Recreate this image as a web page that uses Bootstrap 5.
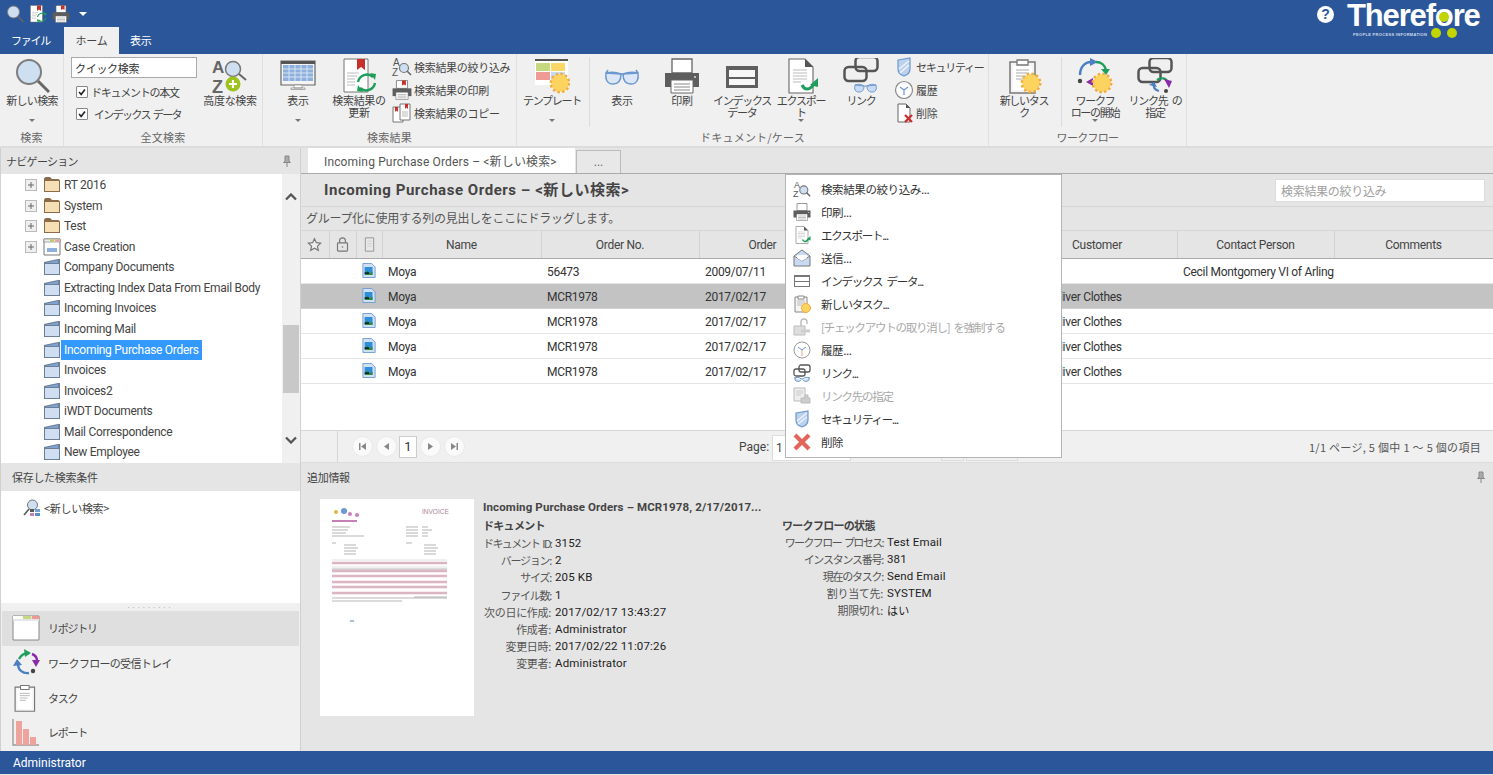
<!DOCTYPE html>
<html lang="ja">
<head>
<meta charset="utf-8">
<title>Therefore</title>
<link href="https://cdn.jsdelivr.net/npm/bootstrap@5.3.0/dist/css/bootstrap.min.css" rel="stylesheet">
<style>
html,body{height:775px;overflow:hidden}
body{font-family:Roboto,"Noto Sans CJK JP",sans-serif;font-size:12px;color:#444;background:#e5e5e5;line-height:14px}
.cj{font-family:"Noto Sans CJK JP",Roboto,sans-serif;font-size:11px;letter-spacing:-.3px}
.cj .k1,.k1{letter-spacing:-1.25px;word-spacing:3px}
.cj .k2,.k2{letter-spacing:-.7px}
.k3,.cj.k3{letter-spacing:-1.6px;word-spacing:2px}
.app-top{height:54px;background:#2b579a;color:#fff}
.qbar{height:27px;padding-left:6px;gap:5px}
.qbar svg{width:18px;height:18px}
.qcaret{border-left:4px solid transparent;border-right:4px solid transparent;border-top:4px solid #fff;margin-left:4px}
.tabstrip{height:27px}
.ttab{padding:0 11px;line-height:27px;color:#fff;white-space:nowrap}
.ttab.on{background:#f0f0f0;color:#444}
.ttab.t1{width:64px}.ttab.t2{width:55px;text-align:center;padding:0}.ttab.t3{width:44px}
.logo-wrap{width:170px;height:54px;position:relative}
.help{position:absolute;left:-6px;top:6px;width:17px;height:17px;border-radius:50%;background:#fff;color:#2b579a;font:bold 14px/17px "Liberation Sans",sans-serif;text-align:center}
.lg-name{position:absolute;left:24px;top:0;font:bold 31px/32px "Liberation Sans",sans-serif;letter-spacing:-1.15px;color:#fff}
.lg-tag{position:absolute;left:30px;top:32px;font:bold 4px/5px "Liberation Sans",sans-serif;letter-spacing:.32px;color:#cfd9ea;white-space:nowrap}
.lg-dot{position:absolute;width:10px;height:10px;border-radius:50%;background:#c2d500}
.lg-a{left:116px;top:12px}.lg-b{left:108px;top:28px}.lg-c{left:124px;top:28px}

.ribbon{height:94px;background:#f0f0f0;border-bottom:2px solid #dcdcdc}
.rgrp{border-right:1px solid #dfdfdf;height:92px}
.rbody{height:74px}
.rlabel{height:18px;line-height:18px;text-align:center;color:#666;letter-spacing:.2px}
.g1{width:64px}.g2{width:199px}.g3{width:254px}.g4{width:472px}.g5{width:198px}
.bigbtn{width:60px;padding-top:4px;color:#444;line-height:12px;text-align:center;flex:none}
.bigbtn svg{width:36px;height:36px;display:block}
.blab{min-height:24px;white-space:nowrap}
.dcaret{width:0;height:0;border-left:3px solid transparent;border-right:3px solid transparent;border-top:3px solid #777;margin-top:1px}
.w64{width:64px}.w66{width:66px}.w56{width:56px}.w70{width:70px}.w58{width:58px}.w62{width:62px}
.pl7{padding-left:7px}
.qsearch{width:126px;margin:3px 0 0 7px;flex:none}
.qinput{height:21px;padding:0 3px;border:1px solid #aaa;border-radius:0;font-size:11px;color:#333;box-shadow:none}
.chk{height:22px;margin-left:5px;gap:3px;white-space:nowrap}
.chk1{margin-top:3px}
.chk .form-check-input,.chk .form-check-input:checked[type=checkbox]{width:12px;height:12px;margin:0;border:1px solid #888;border-radius:1px;background-color:#fff;flex:none;--bs-form-check-bg-image:url("data:image/svg+xml,%3csvg xmlns='http://www.w3.org/2000/svg' viewBox='0 0 12 12'%3e%3cpath fill='none' stroke='%23222' stroke-width='2' d='M2.5 6l2.5 3 4.5-6'/%3e%3c/svg%3e")}
.smcol{padding-top:1px;flex:none}
.smitem{height:23px;gap:2px;white-space:nowrap}
.smitem svg{width:20px;height:20px;flex:none}
.vsep{width:1px;height:70px;background:#dcdcdc;margin:3px 2px 0 2px;flex:none}
.sc1{margin-left:3px}.sc2{margin-left:1px}

.mainarea{height:603px}
.leftp{width:301px;border-left:1px solid #d0d0d0;border-right:1px solid #d0d0d0;flex:none}
.phead{height:26px;line-height:26px;padding-left:5px;background:#e5e5e5;color:#444}
.phead svg{width:10px;height:12px}
.treebox{height:289px;background:#fff}
.treelist{flex:1;margin:0;letter-spacing:-.28px;padding-top:1px}
.tnode{height:20.54px;white-space:nowrap}
.texp{width:12px;height:12px;margin-left:24px;flex:none}
.tnone{width:12px;margin-left:24px;flex:none}
.ticon{width:18px;height:18px;margin-left:6px;flex:none}
.ttext{padding:0 3px;line-height:20px}
.ttext.sel{background:#3399ff;color:#fff}
.sbar{width:18px;background:#f0f0f0;position:relative}
.sthumb{position:absolute;left:1px;right:1px;top:151px;height:68px;background:#c8c8c8}
.schev{position:absolute;left:3px;width:12px;height:8px}
.schev.up{top:19px}.schev.dn{top:262px}
.ph2{height:28px;line-height:28px;padding-left:11px}
.savedbox{height:112px;background:#fff;padding:8px 0 0 22px;gap:3px}
.savedbox svg{width:18px;height:18px}
.savedbox span{line-height:18px}
.splitbar{height:8px;background:#f0f0f0;color:#999;font-size:8px;line-height:6px;text-align:center;letter-spacing:3px}
.navbox{height:140px;background:#f0f0f0;padding-left:1px}
.nvrow{height:34.7px;padding-left:10px;gap:8px;margin-right:1px}
.nvrow.on{background:#dfdfdf}
.nvrow svg{width:28px;height:28px;flex:none}

.rightp{min-width:0;flex:1}
.tabbar{height:26px;background:#e5e5e5;border-bottom:1px solid #aaa;padding-left:7px}
.dtab{height:25px;line-height:29px;padding:0 0 0 16px;width:267px;background:#fff;color:#555;letter-spacing:.15px}
.dtab2{width:45px;height:23px;margin:2px 0 0 1px;border:1px solid #bbb;border-bottom:0;text-align:center;line-height:22px;color:#666;background:#e8e8e8}
.rtitle{height:33px;border-bottom:1px solid #d6d6d6;padding:0 8px 0 23px}
.rtitle h1{font:bold 15px/20px Roboto,"Noto Sans CJK JP",sans-serif;color:#444;margin:0;letter-spacing:.55px}
.rfilter{width:210px;height:23px;border:1px solid #ddd;border-radius:0;padding:0 5px;color:#999;font-size:12px}
.rfilter::placeholder{color:#a0a0a0}
.rgroup{height:24px;border-bottom:1px solid #d6d6d6;line-height:21px;padding-left:5px;color:#555;font-size:12px}
.gridwrap{height:199px;background:#fff}
.tgrid{table-layout:fixed;width:1192px;margin:0;--bs-table-bg:transparent;font-size:12px;color:#333;letter-spacing:-.3px}
.tgrid th{height:27px;padding:1px 0 0;font-weight:400;text-align:center;background:#e5e5e5;border-right:1px solid #d2d2d2;border-bottom:1px solid #aaa;color:#444;vertical-align:middle}
.tgrid th.odate{word-spacing:6px}
.tgrid th svg{width:15px;height:15px;vertical-align:middle}
.tgrid td{height:25px;padding:3px 0 0 6px;background:#fff;border-bottom:1px solid #e6e6e6;white-space:nowrap;overflow:hidden;vertical-align:middle}
.tgrid td.dc{padding:0;text-align:center}
.tgrid td svg{width:14px;height:17px;vertical-align:middle}
.tgrid td.cust{padding-left:35px}
.tgrid tr.sel td{background:#c3c3c3;border-bottom-color:#d0d0d0}
.c1{width:28px}.c2{width:27px}.c3{width:26px}.c4{width:159px}.c5{width:158px}.c6{width:159px}.c7{width:159px}.c8{width:160px}.c9{width:157px}.c10{width:159px}
.pager{height:33px;background:#f0f0f0;border-top:1px solid #d6d6d6;border-bottom:1px solid #dcdcdc}
.pgside{width:37px;height:100%;border-right:1px solid #d6d6d6;flex:none}
.pgbtn{width:21px;height:21px;padding:0;border:1px solid #e8e8e8;background:#fafafa;border-radius:50%;margin-left:3px;line-height:17px;color:#888;flex:none}
.pgbtn svg{width:9px;height:9px;display:block;margin:auto}
.pgfirst{margin-left:14px}
.pgnum{width:18px;height:22px;border:1px solid #ccc;background:#fff;text-align:center;line-height:20px;color:#333;margin-left:2px;font-size:13px;flex:none}
.pglabel{margin-left:274px;width:33px;flex:none}
.pginput{width:79px;height:26px;border:1px solid #ddd;background:#fff;line-height:24px;padding-left:3px;flex:none;margin-top:2px}
.pgsel1{width:23px;height:26px;border:1px solid #ddd;margin:2px 0 0 90px;flex:none}
.pgsel2{width:52px;height:26px;border:1px solid #ddd;margin:2px 0 0 2px;flex:none}
.pginfo{margin-left:auto;padding-right:12px;color:#555;letter-spacing:.3px;white-space:pre}
.infohead{height:28px;line-height:28px;padding:0 3px 0 6px}
.infohead svg{width:10px;height:12px}
.infobody{height:260px;padding:8px 0 0 19px}
.thumb{width:154px;height:217px;background:#fff;flex:none}
.thumb svg{width:154px;height:217px;display:block}
.infotext{margin-left:9px;color:#333;font-size:11.5px}
.ititle{font-weight:700;color:#444;height:17px;line-height:17px;font-size:11.5px;letter-spacing:.13px}
.iheads{font-weight:700;color:#444;height:18px;line-height:18px}
.icols{width:800px}
.icol1{width:299px;flex:none}
.icol1 dl{padding-top:1px}
.irow{height:17.2px;line-height:17px;margin:0}
.irow2{height:17px}
.ilab{text-align:right;flex:none;white-space:nowrap;color:#555}
.ilab1{width:68px}.ilab2{width:101px}
.ival{padding-left:4px;color:#222;white-space:nowrap;letter-spacing:.15px}
.statusb{height:23px;background:#2b579a;color:#fff;line-height:24px;padding-left:13px}
.ctxmenu{position:absolute;left:785px;top:174px;width:277px;height:284px;background:#fff;border:1px solid #b4b4b4;padding:2px 0 0 0;margin:0;z-index:5}
.ctxmenu li{height:23px;gap:10px;padding-left:7px;color:#333}
.ctxmenu svg{width:18px;height:18px;flex:none}
.ctxmenu .dis{color:#a8a8a8}
.ctxmenu .cjm{font-family:"Noto Sans CJK JP",Roboto,sans-serif;font-size:11.5px;letter-spacing:-.4px;white-space:nowrap}
.ctxmenu .cjm.k1{letter-spacing:-1.25px;word-spacing:3px}
</style>
</head>
<body>
<svg class="d-none" xmlns="http://www.w3.org/2000/svg">
<symbol id="i-mag" viewBox="0 0 36 36"><circle cx="15" cy="14" r="12" fill="#cfdff2" stroke="#7d7d7d" stroke-width="2"/><path d="M24 23l11 11" stroke="#666" stroke-width="3"/></symbol>
<symbol id="i-sun" viewBox="0 0 20 20"><circle cx="10" cy="10" r="8" fill="#fcd35f" stroke="#f2ac3c" stroke-width="3" stroke-dasharray="2.2 2"/><circle cx="10" cy="10" r="7.5" fill="#fcd35f"/></symbol>
<symbol id="i-docr" viewBox="0 0 36 36"><path d="M3 1h24v33H3z" fill="#fff" stroke="#777"/><path d="M16 1h8v11l-4-3-4 3z" fill="#c9302c"/><path d="M6 15h12M6 18h10M6 21h8M6 24h8M6 27h8" stroke="#bbb"/><path d="M17 24a9 9 0 0 1 15-5" fill="none" stroke="#1f9e5b" stroke-width="2.4"/><path d="M34 25a9 9 0 0 1-15 5" fill="none" stroke="#1f9e5b" stroke-width="2.4"/><path d="M29 15l6 1-1 6zM22 34l-6-1 1-6z" fill="#1f9e5b"/></symbol>
<symbol id="i-print" viewBox="0 0 36 36"><path d="M8 1h20v14H8z" fill="#fff" stroke="#666" stroke-width="1.3"/><path d="M1 15h34v14H1z" fill="#5d5d5d"/><path d="M7 22h22v13H7z" fill="#fff" stroke="#666"/><path d="M10 26h16M10 29h16M10 32h16" stroke="#888"/><circle cx="31" cy="19" r="1" fill="#ddd"/></symbol>
<symbol id="i-printr" viewBox="0 0 36 36"><path d="M8 1h20v14H8z" fill="#fff" stroke="#666" stroke-width="1.3"/><path d="M18 1h7v9l-3.5-2-3.500 2z" fill="#c9302c"/><path d="M1 15h34v14H1z" fill="#5d5d5d"/><path d="M7 22h22v13H7z" fill="#fff" stroke="#666"/><path d="M10 26h16M10 29h16M10 32h16" stroke="#888"/></symbol>
<symbol id="i-az" viewBox="0 0 20 20"><text x="1" y="9" font-family="Liberation Sans" font-size="10" fill="#555">A</text><text x="0" y="19" font-family="Liberation Sans" font-size="10" fill="#555">Z</text><circle cx="12" cy="11" r="4.500" fill="#cfdff2" stroke="#777" stroke-width="1.200"/><path d="M15 14l4 4" stroke="#666" stroke-width="1.600"/></symbol>
<symbol id="i-azbig" viewBox="0 0 36 36"><text x="0" y="15" font-family="Liberation Sans" font-weight="700" font-size="17" fill="#666">A</text><text x="0" y="35" font-family="Liberation Sans" font-weight="700" font-size="18" fill="#666">Z</text><circle cx="21" cy="11" r="7.500" fill="#cfdff2" stroke="#777" stroke-width="1.500"/><path d="M27 16l7 6" stroke="#666" stroke-width="2"/><circle cx="21" cy="26" r="7.500" fill="#9dc31f"/><path d="M17 26h8M21 22v8" stroke="#fff" stroke-width="2.200"/></symbol>
<symbol id="i-mon" viewBox="0 0 36 36"><path d="M1 3h34v24H1z" fill="#f4f4f4" stroke="#666" stroke-width="1.200"/><path d="M1 3h34v3H1z" fill="#555"/><path d="M3 7h30v16H3z" fill="#8db1dc"/><path d="M3 11h30M3 15h30M3 19h30M9 7v16M15 7v16M21 7v16M27 7v16" stroke="#dfe9f5" stroke-width=".9"/><path d="M14 27h8v3h-8zM11 30h14v1.500H11z" fill="#fff" stroke="#888" stroke-width=".7"/></symbol>
<symbol id="i-copy" viewBox="0 0 20 20"><path d="M1 4h10v15H1z" fill="#fff" stroke="#777"/><path d="M8 1h10v16H8z" fill="#fff" stroke="#777"/><path d="M3 4h3v5l-1.500-1.500L3 9zM13 1h3v5l-1.500-1.500L13 6z" fill="#c9302c"/><path d="M10 9h6M10 11h6M10 13h6" stroke="#bbb"/></symbol>
<symbol id="i-tmpl" viewBox="0 0 36 36"><path d="M1 1h33v26H1z" fill="#fff"/><path d="M1 1h33v2H1z" fill="#555"/><path d="M2 5h14v8H2z" fill="#c5d77f"/><path d="M17 5h14v8H17z" fill="#fbd766"/><path d="M2 14h14v8H2z" fill="#ee9b96"/><path d="M17 14h14v8H17z" fill="#c8daf1"/><use href="#i-sun" x="15" y="14" width="22" height="22"/></symbol>
<symbol id="i-glass" viewBox="0 0 36 36"><path d="M2 15c-1 6 1 11 7 11s8-4 8-10zM34 15c1 6-1 11-7 11s-8-4-8-10z" fill="#dbe7f7" stroke="#6c98d0" stroke-width="1.500"/><path d="M2 15c5-1 10-1 15 1h2c5-2 10-2 15-1M2 15l2-3M34 15l-2-3" fill="none" stroke="#6c98d0" stroke-width="1.500"/></symbol>
<symbol id="i-card" viewBox="0 0 36 36"><path d="M2 8h32v22H2z" fill="#5f5f5f"/><path d="M5 12h26v7H5zM5 21h26v6H5z" fill="#f7f7f7"/></symbol>
<symbol id="i-expo" viewBox="0 0 36 36"><path d="M6 1h16l8 8v26H6z" fill="#fff" stroke="#666" stroke-width="1.100"/><path d="M22 1v8h8z" fill="#555"/><path d="M10 12h14M10 15h14M10 18h14M10 21h14M10 24h8" stroke="#bbb"/><path d="M19 27c3 6 8 5 12-1" fill="none" stroke="#1f9e5b" stroke-width="3"/><path d="M35 20v9l-8-2z" fill="#1f9e5b"/></symbol>
<symbol id="i-chain" viewBox="0 0 36 36"><rect x="1.500" y="12" width="22" height="14" rx="4" fill="none" stroke="#555" stroke-width="2.500"/><rect x="12.500" y="2" width="22" height="14" rx="4" fill="none" stroke="#555" stroke-width="2.500"/></symbol>
<symbol id="i-linkg" viewBox="0 0 36 36"><use href="#i-chain" x="0" y="-3" width="36" height="36"/><path d="M12 27c-1 4 0 7 4 7s5-3 5-6zM33 27c1 4 0 7-4 7s-5-3-5-6z" fill="#c9dbf3" stroke="#6c98d0"/><path d="M12 27c3-1 6-1 9 1h3c3-2 6-2 9-1" fill="none" stroke="#6c98d0"/></symbol>
<symbol id="i-shield" viewBox="0 0 20 20"><path d="M4 3l12-2v11c0 4-3 6-6 7-3-1-6-3-6-7z" fill="#bcd1ec" stroke="#6c98d0" stroke-width="1.200"/><path d="M5 12l10-8M6 16l9-8" stroke="#eef4fb" stroke-width="1.500"/></symbol>
<symbol id="i-clock" viewBox="0 0 20 20"><circle cx="10" cy="10" r="8.500" fill="#fff" stroke="#888" stroke-width="1.200"/><path d="M6 7l4 3 4-3M10 10v5" fill="none" stroke="#6c98d0" stroke-width="1.200"/></symbol>
<symbol id="i-deld" viewBox="0 0 20 20"><path d="M4 1h8l4 4v14H4z" fill="#fff" stroke="#666"/><path d="M12 1v4h4z" fill="#555"/><path d="M11 12l7 7M18 12l-7 7" stroke="#c9302c" stroke-width="2.300"/></symbol>
<symbol id="i-clip" viewBox="0 0 36 36"><path d="M4 4h25v31H4z" fill="#f5f5f5" stroke="#777" stroke-width="1.500"/><path d="M7 8h19v24H7z" fill="#fff"/><path d="M11 2h11v5H11z" fill="#fff" stroke="#777" stroke-width="1.300"/><path d="M10 12h13M10 15h13M10 18h10M10 21h8" stroke="#aaa"/></symbol>
<symbol id="i-task" viewBox="0 0 36 36"><use href="#i-clip" x="0" y="0" width="36" height="36"/><use href="#i-sun" x="14" y="14" width="22" height="22"/></symbol>
<symbol id="i-wf" viewBox="0 0 36 36"><path d="M3 17C3 9 8 4 14 4" fill="none" stroke="#4a7fc1" stroke-width="2.500"/><path d="M13 0l8 4-8 4z" fill="#4a7fc1"/><path d="M19 4c5 0 9 3 10 8" fill="none" stroke="#1f9e5b" stroke-width="2.500"/><path d="M24 11h9l-4 6z" fill="#1f9e5b"/><path d="M9 24l7-4v8z" fill="#8a2aa8"/><circle cx="3" cy="23" r="2.200" fill="#444"/><use href="#i-sun" x="14" y="14" width="22" height="22"/></symbol>
<symbol id="i-lnkto" viewBox="0 0 36 36"><use href="#i-chain"  x="0" y="-2" width="36" height="36"/><path d="M20 22c4-3 9-2 11 2" fill="none" stroke="#1f9e5b" stroke-width="2.200"/><path d="M27 21l8 2-3 7z" fill="#8a2aa8"/><path d="M22 33c-4-1-6-4-5-8" fill="none" stroke="#4a7fc1" stroke-width="2.200"/><path d="M12 27l5-3 3 5z" fill="#4a7fc1"/><circle cx="29" cy="33" r="2" fill="#444"/></symbol>
<symbol id="i-ftan" viewBox="0 0 18 18"><path d="M1 16V3c0-1 1-2 2-2h4l2 2h6c1 0 2 1 2 2v11z" fill="#8c6b4a"/><path d="M2 15V5h14v10z" fill="#f5dfb5"/></symbol>
<symbol id="i-fblue" viewBox="0 0 18 18"><path d="M1 17V4l14-3h2v16z" fill="#6d7f96"/><path d="M2 16V6h14v10z" fill="#cfdef0"/><path d="M2 5l13-3v3z" fill="#7fa3d1"/></symbol>
<symbol id="i-case" viewBox="0 0 18 18"><path d="M1 1h16v16H1z" fill="#fff" stroke="#777"/><path d="M1 1h16v3H1z" fill="#eee" stroke="#777" stroke-width=".6"/><path d="M7 1.500h4v2H7z" fill="#b5cc55"/><path d="M12 1.500h4v2h-4z" fill="#ee9b96"/><path d="M4 10h10v4H4z" fill="#8db1dc"/></symbol>
<symbol id="i-exp" viewBox="0 0 12 12"><rect x=".5" y=".5" width="11" height="11" fill="#efefef" stroke="#bbb"/><path d="M3 6h6M6 3v6" stroke="#666"/></symbol>
<symbol id="i-pin" viewBox="0 0 10 12"><path d="M3 1h4v5l1.500 1.500h-7L3 6zM5 8v4" fill="#aaa" stroke="#888"/></symbol>
<symbol id="i-up" viewBox="0 0 12 8"><path d="M1 6.500l5-5 5 5" fill="none" stroke="#555" stroke-width="2.300"/></symbol>
<symbol id="i-dn" viewBox="0 0 12 8"><path d="M1 1.500l5 5 5-5" fill="none" stroke="#555" stroke-width="2.300"/></symbol>
<symbol id="i-saved" viewBox="0 0 18 18"><circle cx="9.500" cy="6" r="5" fill="#cfdff2" stroke="#777"/><path d="M6 10l-5 6" stroke="#555" stroke-width="1.500"/><path d="M7 10h4v3H7z" fill="#555"/><path d="M12 10h5v3h-5z" fill="#6fa0d8"/><path d="M7 14h4v3H7z" fill="#c77fb8"/><path d="M12 14h5v3h-5z" fill="#5b8fc9"/></symbol>
<symbol id="i-repo" viewBox="0 0 28 28"><path d="M1 2h26v24H1z" fill="#fff" stroke="#888"/><path d="M1 2h26v5H1z" fill="#e6e6e6"/><path d="M1 2h9l3 3H1z" fill="#fff"/><path d="M11 2h8v3h-8z" fill="#c5d77f"/><path d="M20 2h7v3h-7z" fill="#ee9b96"/></symbol>
<symbol id="i-wfn" viewBox="0 0 28 28"><path d="M7 10c2-4 6-6 10-6" fill="none" stroke="#1f9e5b" stroke-width="2.400"/><path d="M12 0l7 4-6 4z" fill="#1f9e5b"/><path d="M20 5c3 1 5 4 5 7" fill="none" stroke="#8a2aa8" stroke-width="2.400"/><path d="M20 11h8l-4 7z" fill="#8a2aa8"/><path d="M17 24c-6 1-11-3-11-9" fill="none" stroke="#4a7fc1" stroke-width="2.400"/><path d="M1 17l4-7 5 6z" fill="#4a7fc1"/><circle cx="21" cy="22" r="2.200" fill="#444"/></symbol>
<symbol id="i-rep" viewBox="0 0 28 28"><path d="M1 1v26h26" fill="none" stroke="#999" stroke-width="1.300"/><path d="M4 3h6v24H4zM11 11h6v16h-6zM18 19h6v8h-6z" fill="#efa39d"/></symbol>
<symbol id="i-star" viewBox="0 0 18 18"><path d="M9 2l2.200 4.800 5.200.6-3.900 3.500 1.100 5.100L9 13.400 4.400 16l1.100-5.100L1.600 7.400l5.200-.6z" fill="#eee" stroke="#777" stroke-width="1.400"/></symbol>
<symbol id="i-lock" viewBox="0 0 18 18"><rect x="3" y="7" width="12" height="10" rx="1" fill="none" stroke="#777" stroke-width="1.400"/><path d="M5.500 7V4.500C5.500 2 7 1 9 1s3.500 1 3.500 3.500V7" fill="none" stroke="#777" stroke-width="1.400"/><circle cx="9" cy="12" r="1" fill="#777"/></symbol>
<symbol id="i-page" viewBox="0 0 18 18"><path d="M4 1h10v16H4z" fill="#e8e8e8" stroke="#888"/><path d="M6 5h6M6 8h6M6 11h6" stroke="#ccc"/></symbol>
<symbol id="i-imgdoc" viewBox="0 0 16 18"><path d="M1 1h10l4 4v12H1z" fill="#cfe0f5" stroke="#6c98d0"/><path d="M3 5h9v9H3z" fill="#2e8fd8"/><path d="M3 14l3-5 3 3 3-2v4z" fill="#2f8a3c"/><path d="M3 11h5v2H3z" fill="#123"/></symbol>
<symbol id="i-mail" viewBox="0 0 18 18"><path d="M1 7l8-6 8 6v10H1z" fill="#c9dbf3" stroke="#777"/><path d="M1 7l8 5 8-5" fill="#eef4fb" stroke="#777"/><path d="M4 6h10v3l-5 3-5-3z" fill="#fff"/></symbol>
<symbol id="i-cardm" viewBox="0 0 18 18"><path d="M1 3h16v12H1z" fill="#777"/><path d="M2 5h14v4H2zM2 10h14v4H2z" fill="#fff"/></symbol>
<symbol id="i-taskm" viewBox="0 0 18 18"><path d="M2 2h12v15H2z" fill="#f5f5f5" stroke="#888"/><path d="M5 1h6v3H5z" fill="#fff" stroke="#888"/><path d="M4 6h8M4 8h8M4 10h5" stroke="#bbb"/><circle cx="13" cy="13" r="4.500" fill="#fcd35f" stroke="#f2ac3c"/></symbol>
<symbol id="i-unl" viewBox="0 0 18 18"><path d="M1 8h11v9H1z" fill="#ddd" stroke="#bbb"/><path d="M8 8V4c0-2 1-3 3-3s3 1 3 3v2" fill="none" stroke="#bbb" stroke-width="1.400"/><path d="M8 13h9" stroke="#ccc" stroke-width="3"/></symbol>
<symbol id="i-clockm" viewBox="0 0 18 18"><circle cx="9" cy="9" r="8" fill="#fff" stroke="#999"/><path d="M5 6l4 3 4-3" fill="none" stroke="#6c98d0"/><path d="M9 9v6" stroke="#e9a29c"/></symbol>
<symbol id="i-lnkm" viewBox="0 0 18 18"><rect x="1" y="5" width="11" height="7" rx="2" fill="none" stroke="#555" stroke-width="1.300"/><rect x="6" y="1" width="11" height="7" rx="2" fill="none" stroke="#555" stroke-width="1.300"/><path d="M1 14c3-1 5-1 7 1h2c2-2 4-2 7-1M2 14v2c2 2 4 2 6 0M16 14v2c-2 2-4 2-6 0" fill="#c9dbf3" stroke="#6c98d0"/></symbol>
<symbol id="i-lnkt" viewBox="0 0 18 18"><path d="M1 1h11v13H1z" fill="#eee" stroke="#bbb"/><path d="M3 4h7M3 6h7M3 8h5" stroke="#ccc"/><path d="M8 11h4v-3h3v3h2v5H8z" fill="#ccc" stroke="#bbb"/></symbol>
<symbol id="i-shm" viewBox="0 0 18 18"><path d="M3 3l12-2v9c0 4-3 6-6 7-3-1-6-3-6-7z" fill="#bcd1ec" stroke="#6c98d0" stroke-width="1.200"/><path d="M4 11l10-8M5 14l9-7" stroke="#eef4fb" stroke-width="1.400"/></symbol>
<symbol id="i-x" viewBox="0 0 18 18"><path d="M2 2l14 14M16 2L2 16" stroke="#e2665c" stroke-width="4.200"/></symbol>
</svg>

<header class="app-top d-flex justify-content-between">
  <div class="d-flex flex-column">
    <div class="qbar d-flex align-items-center">
      <svg><use href="#i-mag"/></svg><svg><use href="#i-docr"/></svg><svg><use href="#i-printr"/></svg><span class="qcaret"></span>
    </div>
    <div class="tabstrip d-flex cj">
      <div class="ttab t1 k1">ファイル</div><div class="ttab t2 on">ホーム</div><div class="ttab t3">表示</div>
    </div>
  </div>
  <div class="logo-wrap">
    <span class="help">?</span>
    <span class="lg-name">Therefore</span>
    <span class="lg-dot lg-a"></span><span class="lg-dot lg-b"></span><span class="lg-dot lg-c"></span>
    <span class="lg-tag">PEOPLE PROCESS INFORMATION</span>
  </div>
</header>

<section class="ribbon d-flex cj">
  <div class="rgrp g1 d-flex flex-column">
    <div class="rbody d-flex">
      <div class="bigbtn w64 d-flex flex-column align-items-center"><svg><use href="#i-mag"/></svg><span class="blab k2">新しい検索</span><span class="dcaret"></span></div>
    </div>
    <div class="rlabel">検索</div>
  </div>
  <div class="rgrp g2 d-flex flex-column">
    <div class="rbody d-flex">
      <div class="qsearch">
        <input class="form-control qinput cj" type="text" value="クイック検索">
        <label class="chk chk1 d-flex align-items-center k1"><input class="form-check-input" type="checkbox" checked>ドキュメントの本文</label>
        <label class="chk d-flex align-items-center k3"><input class="form-check-input" type="checkbox" checked>&nbsp;インデックス データ</label>
      </div>
      <div class="bigbtn w66 d-flex flex-column align-items-center"><svg><use href="#i-azbig"/></svg><span class="blab">高度な検索</span></div>
    </div>
    <div class="rlabel">全文検索</div>
  </div>
  <div class="rgrp g3 d-flex flex-column">
    <div class="rbody d-flex pl7">
      <div class="bigbtn w56 d-flex flex-column align-items-center"><svg><use href="#i-mon"/></svg><span class="blab">表示</span><span class="dcaret"></span></div>
      <div class="bigbtn w66 d-flex flex-column align-items-center"><svg><use href="#i-docr"/></svg><span class="blab">検索結果の<br>更新</span></div>
      <div class="smcol d-flex flex-column">
        <div class="smitem d-flex align-items-center"><svg><use href="#i-az"/></svg>検索結果の絞り込み</div>
        <div class="smitem d-flex align-items-center"><svg><use href="#i-printr"/></svg>検索結果の印刷</div>
        <div class="smitem d-flex align-items-center"><svg><use href="#i-copy"/></svg>検索結果のコピー</div>
      </div>
    </div>
    <div class="rlabel">検索結果</div>
  </div>
  <div class="rgrp g4 d-flex flex-column">
    <div class="rbody d-flex">
      <div class="bigbtn w70 d-flex flex-column align-items-center"><svg><use href="#i-tmpl"/></svg><span class="blab k1">テンプレート</span><span class="dcaret"></span></div>
      <span class="vsep"></span>
      <div class="bigbtn d-flex flex-column align-items-center"><svg><use href="#i-glass"/></svg><span class="blab">表示</span></div>
      <div class="bigbtn d-flex flex-column align-items-center"><svg><use href="#i-print"/></svg><span class="blab">印刷</span></div>
      <div class="bigbtn d-flex flex-column align-items-center"><svg><use href="#i-card"/></svg><span class="blab k1">インデックス<br>データ</span></div>
      <div class="bigbtn w58 d-flex flex-column align-items-center"><svg><use href="#i-expo"/></svg><span class="blab k1">エクスポー<br>ト</span><span class="dcaret"></span></div>
      <div class="bigbtn d-flex flex-column align-items-center sc2"><svg><use href="#i-linkg"/></svg><span class="blab k1">リンク</span></div>
      <div class="smcol d-flex flex-column sc1">
        <div class="smitem d-flex align-items-center k1"><svg><use href="#i-shield"/></svg>セキュリティー</div>
        <div class="smitem d-flex align-items-center"><svg><use href="#i-clock"/></svg>履歴</div>
        <div class="smitem d-flex align-items-center"><svg><use href="#i-deld"/></svg>削除</div>
      </div>
    </div>
    <div class="rlabel">ドキュメント/ケース</div>
  </div>
  <div class="rgrp g5 d-flex flex-column">
    <div class="rbody d-flex">
      <div class="bigbtn w70 d-flex flex-column align-items-center"><svg><use href="#i-task"/></svg><span class="blab k1">新しいタス<br>ク</span></div>
      <span class="vsep"></span>
      <div class="bigbtn w62 d-flex flex-column align-items-center"><svg><use href="#i-wf"/></svg><span class="blab k1">ワークフ<br>ローの開始</span><span class="dcaret"></span></div>
      <div class="bigbtn w58 d-flex flex-column align-items-center"><svg><use href="#i-lnkto"/></svg><span class="blab k1">リンク先 の<br>指定</span></div>
    </div>
    <div class="rlabel k2">ワークフロー</div>
  </div>
</section>

<main class="mainarea d-flex">
  <aside class="leftp d-flex flex-column">
    <div class="phead d-flex justify-content-between align-items-center pe-1"><span class="cj k2">ナビゲーション</span><svg class="me-1"><use href="#i-pin"/></svg></div>
    <div class="treebox d-flex">
      <ul class="treelist list-unstyled d-flex flex-column">
        <li class="tnode d-flex align-items-center"><svg class="texp"><use href="#i-exp"/></svg><svg class="ticon"><use href="#i-ftan"/></svg><span class="ttext">RT 2016</span></li>
        <li class="tnode d-flex align-items-center"><svg class="texp"><use href="#i-exp"/></svg><svg class="ticon"><use href="#i-ftan"/></svg><span class="ttext">System</span></li>
        <li class="tnode d-flex align-items-center"><svg class="texp"><use href="#i-exp"/></svg><svg class="ticon"><use href="#i-ftan"/></svg><span class="ttext">Test</span></li>
        <li class="tnode d-flex align-items-center"><svg class="texp"><use href="#i-exp"/></svg><svg class="ticon"><use href="#i-case"/></svg><span class="ttext">Case Creation</span></li>
        <li class="tnode d-flex align-items-center"><span class="tnone"></span><svg class="ticon"><use href="#i-fblue"/></svg><span class="ttext">Company Documents</span></li>
        <li class="tnode d-flex align-items-center"><span class="tnone"></span><svg class="ticon"><use href="#i-fblue"/></svg><span class="ttext">Extracting Index Data From Email Body</span></li>
        <li class="tnode d-flex align-items-center"><span class="tnone"></span><svg class="ticon"><use href="#i-fblue"/></svg><span class="ttext">Incoming Invoices</span></li>
        <li class="tnode d-flex align-items-center"><span class="tnone"></span><svg class="ticon"><use href="#i-fblue"/></svg><span class="ttext">Incoming Mail</span></li>
        <li class="tnode d-flex align-items-center"><span class="tnone"></span><svg class="ticon"><use href="#i-fblue"/></svg><span class="ttext sel">Incoming Purchase Orders</span></li>
        <li class="tnode d-flex align-items-center"><span class="tnone"></span><svg class="ticon"><use href="#i-fblue"/></svg><span class="ttext">Invoices</span></li>
        <li class="tnode d-flex align-items-center"><span class="tnone"></span><svg class="ticon"><use href="#i-fblue"/></svg><span class="ttext">Invoices2</span></li>
        <li class="tnode d-flex align-items-center"><span class="tnone"></span><svg class="ticon"><use href="#i-fblue"/></svg><span class="ttext">iWDT Documents</span></li>
        <li class="tnode d-flex align-items-center"><span class="tnone"></span><svg class="ticon"><use href="#i-fblue"/></svg><span class="ttext">Mail Correspondence</span></li>
        <li class="tnode d-flex align-items-center"><span class="tnone"></span><svg class="ticon"><use href="#i-fblue"/></svg><span class="ttext">New Employee</span></li>
      </ul>
      <div class="sbar"><svg class="schev up"><use href="#i-up"/></svg><span class="sthumb"></span><svg class="schev dn"><use href="#i-dn"/></svg></div>
    </div>
    <div class="phead ph2 cj">保存した検索条件</div>
    <div class="savedbox d-flex align-items-start cj"><svg><use href="#i-saved"/></svg><span>&lt;新しい検索&gt;</span></div>
    <div class="splitbar">.........</div>
    <div class="navbox d-flex flex-column cj">
      <div class="nvrow on d-flex align-items-center k1"><svg><use href="#i-repo"/></svg>リポジトリ</div>
      <div class="nvrow d-flex align-items-center k2"><svg><use href="#i-wfn"/></svg>ワークフローの受信トレイ</div>
      <div class="nvrow d-flex align-items-center k1"><svg><use href="#i-clip"/></svg>タスク</div>
      <div class="nvrow d-flex align-items-center k1"><svg><use href="#i-rep"/></svg>レポート</div>
    </div>
  </aside>

  <section class="rightp d-flex flex-column">
    <div class="tabbar d-flex">
      <div class="dtab">Incoming Purchase Orders – &lt;新しい検索&gt;</div>
      <div class="dtab2">...</div>
    </div>
    <div class="rtitle d-flex align-items-center justify-content-between">
      <h1>Incoming Purchase Orders – &lt;新しい検索&gt;</h1>
      <input class="form-control rfilter cj" type="text" placeholder="検索結果の絞り込み">
    </div>
    <div class="rgroup cj">グループ化に使用する列の見出しをここにドラッグします。</div>
    <div class="gridwrap">
      <table class="table tgrid">
        <colgroup><col class="c1"><col class="c2"><col class="c3"><col class="c4"><col class="c5"><col class="c6"><col class="c7"><col class="c8"><col class="c9"><col class="c10"></colgroup>
        <thead><tr><th><svg><use href="#i-star"/></svg></th><th><svg><use href="#i-lock"/></svg></th><th><svg><use href="#i-page"/></svg></th><th>Name</th><th>Order No.</th><th class="odate">Order Date</th><th>Amount</th><th>Customer</th><th>Contact Person</th><th>Comments</th></tr></thead>
        <tbody>
          <tr><td></td><td></td><td class="dc"><svg><use href="#i-imgdoc"/></svg></td><td>Moya</td><td>56473</td><td>2009/07/11</td><td></td><td></td><td>Cecil Montgomery VI of Arlington</td><td></td></tr>
          <tr class="sel"><td></td><td></td><td class="dc"><svg><use href="#i-imgdoc"/></svg></td><td>Moya</td><td>MCR1978</td><td>2017/02/17</td><td></td><td class="cust">Oliver Clothes</td><td></td><td></td></tr>
          <tr><td></td><td></td><td class="dc"><svg><use href="#i-imgdoc"/></svg></td><td>Moya</td><td>MCR1978</td><td>2017/02/17</td><td></td><td class="cust">Oliver Clothes</td><td></td><td></td></tr>
          <tr><td></td><td></td><td class="dc"><svg><use href="#i-imgdoc"/></svg></td><td>Moya</td><td>MCR1978</td><td>2017/02/17</td><td></td><td class="cust">Oliver Clothes</td><td></td><td></td></tr>
          <tr><td></td><td></td><td class="dc"><svg><use href="#i-imgdoc"/></svg></td><td>Moya</td><td>MCR1978</td><td>2017/02/17</td><td></td><td class="cust">Oliver Clothes</td><td></td><td></td></tr>
        </tbody>
      </table>
    </div>
    <div class="pager d-flex align-items-center">
      <span class="pgside"></span>
      <button class="pgbtn pgfirst" type="button"><svg viewBox="0 0 9 9"><path d="M1 1h1.500v7H1zM8 1v7L3 4.500z" fill="#888"/></svg></button>
      <button class="pgbtn" type="button"><svg viewBox="0 0 9 9"><path d="M7 1v7L2 4.500z" fill="#888"/></svg></button>
      <span class="pgnum">1</span>
      <button class="pgbtn" type="button"><svg viewBox="0 0 9 9"><path d="M2 1v7l5-3.500z" fill="#888"/></svg></button>
      <button class="pgbtn" type="button"><svg viewBox="0 0 9 9"><path d="M8 1H6.500v7H8zM1 1v7l5-3.500z" fill="#888"/></svg></button>
      <span class="pglabel">Page:</span>
      <span class="pginput">1</span>
      <span class="pgsel1"></span><span class="pgsel2"></span>
      <span class="pginfo cj">1/1 ページ, 5 個中 1 ～ 5 個の項目</span>
    </div>
    <div class="infohead d-flex justify-content-between align-items-center"><span class="cj">追加情報</span><svg class="me-1"><use href="#i-pin"/></svg></div>
    <div class="infobody d-flex">
      <div class="thumb">
        <svg viewBox="0 0 154 217">
          <circle cx="16" cy="13" r="2" fill="#e7b14a"/><circle cx="24" cy="12" r="3" fill="#6c98d0"/><circle cx="30" cy="15" r="2" fill="#c77fb8"/><circle cx="37" cy="16" r="2" fill="#c77fb8"/>
          <path d="M12 22h25" stroke="#c77fb8" stroke-width="2"/>
          <text x="102" y="15" font-family="Liberation Sans" font-size="6.500" fill="#a9849a">INVOICE</text>
          <path d="M12 28h18M12 31h16M12 34h14M12 37h32M86 28h12M86 31h12M86 34h12M86 37h12M102 28h6M102 31h10M102 34h6M102 37h6M12 44h4M86 44h6M24 46h12M24 49h14M24 52h12M24 55h12M104 46h12M104 49h14M104 52h12M104 55h12" stroke="#aaa" stroke-width=".9"/>
          <path d="M12 61h115M12 68h115" stroke="#ccc" stroke-width=".6"/>
          <path d="M12 64h115M12 72h115M12 77h115M12 83h115M12 88h115M12 94h115" stroke="#dcb5c3" stroke-width="2.500"/>
          <path d="M12 70h115M12 99h115M12 102h70M94 98h33" stroke="#999" stroke-width=".7"/>
          <path d="M30 122h4" stroke="#5b7fc0" stroke-width="1"/>
        </svg>
      </div>
      <div class="infotext">
        <div class="ititle">Incoming Purchase Orders – MCR1978, 2/17/2017...</div>
        <div class="icols d-flex">
          <div class="icol1">
            <div class="iheads cj k2">ドキュメント</div>
            <dl class="mb-0">
              <div class="irow d-flex"><dt class="ilab ilab1 fw-normal cj k3">ドキュメント ID:</dt><dd class="ival mb-0">3152</dd></div>
              <div class="irow d-flex"><dt class="ilab ilab1 fw-normal cj k1">バージョン:</dt><dd class="ival mb-0">2</dd></div>
              <div class="irow d-flex"><dt class="ilab ilab1 fw-normal cj k1">サイズ:</dt><dd class="ival mb-0">205 KB</dd></div>
              <div class="irow d-flex"><dt class="ilab ilab1 fw-normal cj k1">ファイル数:</dt><dd class="ival mb-0">1</dd></div>
              <div class="irow d-flex"><dt class="ilab ilab1 fw-normal cj">次の日に作成:</dt><dd class="ival mb-0">2017/02/17 13:43:27</dd></div>
              <div class="irow d-flex"><dt class="ilab ilab1 fw-normal cj">作成者:</dt><dd class="ival mb-0">Administrator</dd></div>
              <div class="irow d-flex"><dt class="ilab ilab1 fw-normal cj">変更日時:</dt><dd class="ival mb-0">2017/02/22 11:07:26</dd></div>
              <div class="irow d-flex"><dt class="ilab ilab1 fw-normal cj">変更者:</dt><dd class="ival mb-0">Administrator</dd></div>
            </dl>
          </div>
          <div>
            <div class="iheads cj k2">ワークフローの状態</div>
            <dl class="mb-0">
              <div class="irow irow2 d-flex"><dt class="ilab ilab2 fw-normal cj k3">ワークフロー プロセス:</dt><dd class="ival mb-0">Test Email</dd></div>
              <div class="irow irow2 d-flex"><dt class="ilab ilab2 fw-normal cj k1">インスタンス番号:</dt><dd class="ival mb-0">381</dd></div>
              <div class="irow irow2 d-flex"><dt class="ilab ilab2 fw-normal cj k1">現在のタスク:</dt><dd class="ival mb-0">Send Email</dd></div>
              <div class="irow irow2 d-flex"><dt class="ilab ilab2 fw-normal cj">割り当て先:</dt><dd class="ival mb-0">SYSTEM</dd></div>
              <div class="irow irow2 d-flex"><dt class="ilab ilab2 fw-normal cj">期限切れ:</dt><dd class="ival mb-0 cj">はい</dd></div>
            </dl>
          </div>
        </div>
      </div>
    </div>
  </section>
</main>

<footer class="statusb">Administrator</footer>

<ul class="ctxmenu list-unstyled">
  <li class="d-flex align-items-center"><svg><use href="#i-az"/></svg><span class="cjm">検索結果の絞り込み...</span></li>
  <li class="d-flex align-items-center"><svg><use href="#i-print"/></svg><span class="cjm">印刷...</span></li>
  <li class="d-flex align-items-center"><svg><use href="#i-expo"/></svg><span class="cjm k1">エクスポート...</span></li>
  <li class="d-flex align-items-center"><svg><use href="#i-mail"/></svg><span class="cjm">送信...</span></li>
  <li class="d-flex align-items-center"><svg><use href="#i-cardm"/></svg><span class="cjm k1">インデックス データ...</span></li>
  <li class="d-flex align-items-center"><svg><use href="#i-taskm"/></svg><span class="cjm k1">新しいタスク...</span></li>
  <li class="d-flex align-items-center dis"><svg><use href="#i-unl"/></svg><span class="cjm k1">[チェックアウトの取り消し] を強制する</span></li>
  <li class="d-flex align-items-center"><svg><use href="#i-clockm"/></svg><span class="cjm">履歴...</span></li>
  <li class="d-flex align-items-center"><svg><use href="#i-lnkm"/></svg><span class="cjm k1">リンク...</span></li>
  <li class="d-flex align-items-center dis"><svg><use href="#i-lnkt"/></svg><span class="cjm k1">リンク先の指定</span></li>
  <li class="d-flex align-items-center"><svg><use href="#i-shm"/></svg><span class="cjm k1">セキュリティー...</span></li>
  <li class="d-flex align-items-center"><svg><use href="#i-x"/></svg><span class="cjm">削除</span></li>
</ul>
<script src="https://cdn.jsdelivr.net/npm/bootstrap@5.3.0/dist/js/bootstrap.bundle.min.js"></script>
</body>
</html>
